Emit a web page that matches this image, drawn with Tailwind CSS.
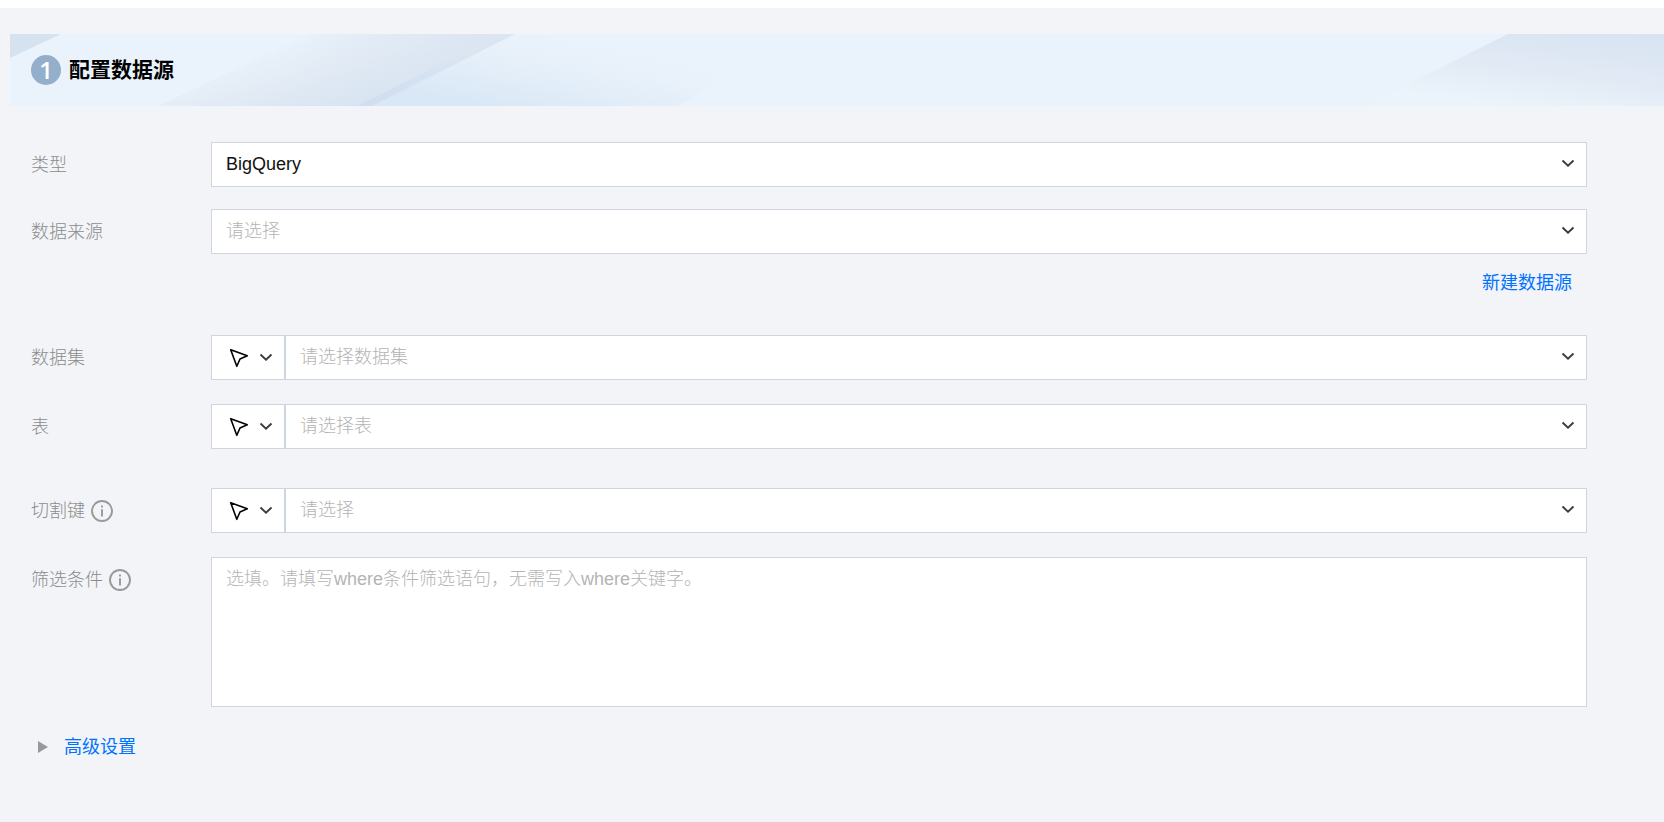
<!DOCTYPE html>
<html lang="zh-CN">
<head>
    <meta charset="UTF-8">
    <meta name="viewport" content="width=device-width, initial-scale=1.0">
    <title>配置数据源</title>
    <script src="https://cdn.jsdelivr.net/npm/@tailwindcss/browser@4"></script>
</head>
<body class="min-h-screen bg-[#f2f4f8] border-t-8 border-white font-['Liberation_Sans','Noto_Sans_CJK_SC',sans-serif] text-[18px] leading-[26px] text-black">
    <!-- Iconos compartidos -->
    <svg class="hidden">
        <symbol id="chevron" viewBox="0 0 14 9">
            <path d="M1.5 1.5 7 6.8l5.500-5.300" fill="none" stroke="#3c3c3c" stroke-width="1.900"/>
        </symbol>
        <symbol id="pointer" viewBox="0 0 20 20">
            <path d="M1.700 1.700 18.300 7.800l-7.300 3.200L7.800 18.300Z" fill="none" stroke="#000" stroke-width="1.600" stroke-linejoin="round"/>
        </symbol>
        <symbol id="info" viewBox="0 0 22 22">
            <circle cx="11" cy="11" r="10" fill="none" stroke="#999" stroke-width="1.900"/>
            <path d="M11 9.200v7.300M11 5.500v2" stroke="#999" stroke-width="1.900"/>
        </symbol>
    </svg>

    <main class="pt-[26px] pl-[10px]">
        <!-- Banner -->
        <header class="relative h-[72px] overflow-hidden bg-[#eaf2fc]">
            <svg class="absolute left-0 top-0" width="800" height="72" viewBox="0 0 800 72">
                <defs>
                    <linearGradient id="g1" gradientUnits="userSpaceOnUse" x1="300" y1="-10" x2="330" y2="90">
                        <stop offset="0" stop-color="#ebf4fc"/>
                        <stop offset="0.400" stop-color="#e4ecf6"/>
                        <stop offset="1" stop-color="#d3e2f0"/>
                    </linearGradient>
                    <linearGradient id="g2" gradientUnits="userSpaceOnUse" x1="520" y1="-4" x2="504" y2="78">
                        <stop offset="0" stop-color="#eaf3fc"/>
                        <stop offset="0.300" stop-color="#e8f1fa"/>
                        <stop offset="1" stop-color="#d9e8f6"/>
                    </linearGradient>
                    <linearGradient id="g3" gradientUnits="userSpaceOnUse" x1="660" y1="60" x2="690" y2="0">
                        <stop offset="0" stop-color="#eaf2fc" stop-opacity="0"/>
                        <stop offset="1" stop-color="#eaf2fc"/>
                    </linearGradient>
                    <linearGradient id="g4" gradientUnits="userSpaceOnUse" x1="280" y1="0" x2="480" y2="0">
                        <stop offset="0" stop-color="#dbe5f1" stop-opacity="0"/>
                        <stop offset="1" stop-color="#dbe5f1"/>
                    </linearGradient>
                    <linearGradient id="g5" gradientUnits="userSpaceOnUse" x1="350" y1="0" x2="460" y2="0">
                        <stop offset="0" stop-color="#cfddf0"/>
                        <stop offset="1" stop-color="#cfddf0" stop-opacity="0"/>
                    </linearGradient>
                </defs>
                <path d="M0 0h51L0 24Z" fill="#d5e3f0"/>
                <path d="M505 0h285L668 72H362Z" fill="url(#g2)"/>
                <path d="M505 0h285L668 72H362Z" fill="url(#g3)"/>
                <path d="M300 0h205L362 72H148Z" fill="url(#g1)"/>
                <path d="M300 0h205L362 72H148Z" fill="url(#g4)" opacity="0.700"/>
                <path d="M362 72h-15L480 6l14 0Z" fill="url(#g5)"/>
            </svg>
            <svg class="absolute right-0 top-0" width="310" height="72" viewBox="0 0 310 72">
                <defs>
                    <linearGradient id="g6" gradientUnits="userSpaceOnUse" x1="230" y1="-12" x2="218" y2="80">
                        <stop offset="0" stop-color="#d6e3f1"/>
                        <stop offset="0.600" stop-color="#e2eaf5"/>
                        <stop offset="1" stop-color="#ebf3fb"/>
                    </linearGradient>
                </defs>
                <path d="M154 0h156v72H10Z" fill="url(#g6)"/>
            </svg>
            <div class="relative flex h-full items-center gap-2 pl-[21px]">
                <span class="flex size-[30px] items-center justify-center rounded-full bg-[#94afcb] font-['Open_Sans',sans-serif] text-[24px] font-semibold text-white">1</span>
                <h1 class="text-[21px] font-bold">配置数据源</h1>
            </div>
        </header>

        <form class="pt-9 pl-[21px] pr-[77px] font-light text-[#8c8c8c]">
            <!-- Tipo -->
            <div class="mb-[22px] grid grid-cols-[180px_1fr] items-center">
                <label for="type">类型</label>
                <div class="relative">
                    <select id="type" class="block h-[45px] w-full appearance-none border border-[#cfd5de] bg-white px-[14px] pb-[2px] text-[#111]">
                        <option>BigQuery</option>
                    </select>
                    <svg class="pointer-events-none absolute right-3 top-[17px] h-[9px] w-[14px]"><use href="#chevron"/></svg>
                </div>
            </div>

            <!-- Origen -->
            <div class="grid grid-cols-[180px_1fr] items-center">
                <label for="source">数据来源</label>
                <div class="relative">
                    <select id="source" class="block h-[45px] w-full appearance-none border border-[#cfd5de] bg-white px-[14px] pb-[2px] text-[#b4b4b4]">
                        <option>请选择</option>
                    </select>
                    <svg class="pointer-events-none absolute right-3 top-[17px] h-[9px] w-[14px]"><use href="#chevron"/></svg>
                </div>
            </div>
            <div class="flex h-[81px] justify-end pr-[15px] pt-4">
                <a href="#" class="font-normal text-[#0072ff]">新建数据源</a>
            </div>

            <!-- Dataset -->
            <div class="mb-6 grid grid-cols-[180px_1fr] items-center">
                <label for="dataset">数据集</label>
                <div class="flex">
                    <button type="button" aria-label="数据集输入方式" class="flex h-[45px] w-[74px] items-center gap-[10px] border border-[#cfd5de] bg-white pl-[17px]">
                        <svg class="size-5"><use href="#pointer"/></svg>
                        <svg class="h-[9px] w-[14px]"><use href="#chevron"/></svg>
                    </button>
                    <div class="relative flex-1">
                        <select id="dataset" class="block h-[45px] w-full appearance-none border border-[#cfd5de] bg-white px-[14px] pb-[2px] text-[#b4b4b4]">
                            <option>请选择数据集</option>
                        </select>
                        <svg class="pointer-events-none absolute right-3 top-[17px] h-[9px] w-[14px]"><use href="#chevron"/></svg>
                    </div>
                </div>
            </div>

            <!-- Tabla -->
            <div class="mb-[39px] grid grid-cols-[180px_1fr] items-center">
                <label for="table">表</label>
                <div class="flex">
                    <button type="button" aria-label="表输入方式" class="flex h-[45px] w-[74px] items-center gap-[10px] border border-[#cfd5de] bg-white pl-[17px]">
                        <svg class="size-5"><use href="#pointer"/></svg>
                        <svg class="h-[9px] w-[14px]"><use href="#chevron"/></svg>
                    </button>
                    <div class="relative flex-1">
                        <select id="table" class="block h-[45px] w-full appearance-none border border-[#cfd5de] bg-white px-[14px] pb-[2px] text-[#b4b4b4]">
                            <option>请选择表</option>
                        </select>
                        <svg class="pointer-events-none absolute right-3 top-[17px] h-[9px] w-[14px]"><use href="#chevron"/></svg>
                    </div>
                </div>
            </div>

            <!-- Clave de partición -->
            <div class="mb-6 grid grid-cols-[180px_1fr] items-center">
                <label for="split-key" class="flex items-center gap-[6px]">切割键
                    <svg class="size-[22px]"><use href="#info"/></svg>
                </label>
                <div class="flex">
                    <button type="button" aria-label="切割键输入方式" class="flex h-[45px] w-[74px] items-center gap-[10px] border border-[#cfd5de] bg-white pl-[17px]">
                        <svg class="size-5"><use href="#pointer"/></svg>
                        <svg class="h-[9px] w-[14px]"><use href="#chevron"/></svg>
                    </button>
                    <div class="relative flex-1">
                        <select id="split-key" class="block h-[45px] w-full appearance-none border border-[#cfd5de] bg-white px-[14px] pb-[2px] text-[#b4b4b4]">
                            <option>请选择</option>
                        </select>
                        <svg class="pointer-events-none absolute right-3 top-[17px] h-[9px] w-[14px]"><use href="#chevron"/></svg>
                    </div>
                </div>
            </div>

            <!-- Filtro -->
            <div class="grid grid-cols-[180px_1fr] items-start">
                <label for="filter" class="flex h-[45px] items-center gap-[6px]">筛选条件
                    <svg class="size-[22px]"><use href="#info"/></svg>
                </label>
                <textarea id="filter" placeholder="选填。请填写where条件筛选语句，无需写入where关键字。" class="block h-[150px] w-full resize-none border border-[#cfd5de] bg-white px-[14px] py-2 placeholder:text-[#b4b4b4]"></textarea>
            </div>

            <!-- Ajustes avanzados -->
            <button type="button" class="mt-[27px] flex items-center gap-4 pl-[7px] font-normal text-[#0072ff]">
                <svg width="10" height="12" viewBox="0 0 10 12"><path d="M0 0 10 6 0 12Z" fill="#999"/></svg>
                高级设置
            </button>
        </form>
    </main>
</body>
</html>
